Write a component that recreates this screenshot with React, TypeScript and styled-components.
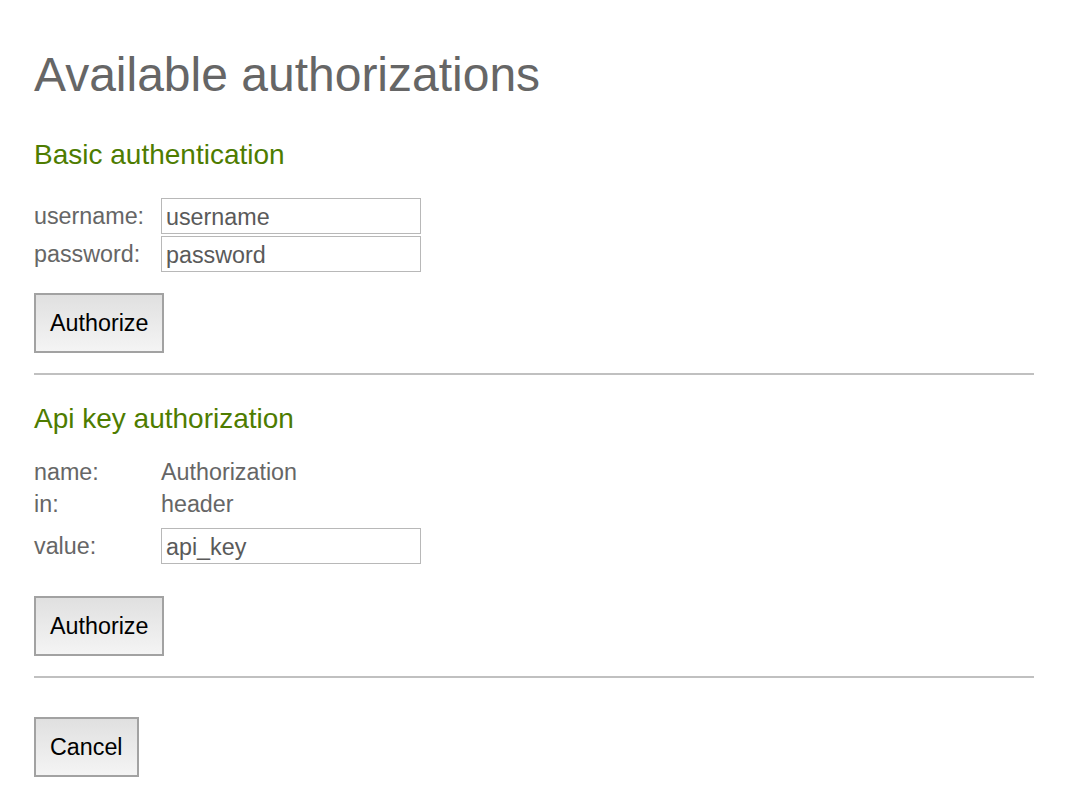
import React from "react";
import styled, { createGlobalStyle } from "styled-components";

const GlobalStyle = createGlobalStyle`
  html, body {
    margin: 0;
    padding: 0;
    background: #ffffff;
  }
  body {
    font-family: "Liberation Sans", Arial, Helvetica, sans-serif;
  }
`;

const FONT = "23.3px";

const Page = styled.div`
  padding: 47px 36px 0 34px;
  display: flex;
  flex-direction: column;
  align-items: flex-start;
`;

const Title = styled.h1`
  margin: 0;
  font-size: 48px;
  line-height: 56px;
  font-weight: normal;
  color: #666666;
`;

const SectionTitle = styled.h3<{ $mt: number }>`
  margin: ${(p) => p.$mt}px 0 0;
  font-size: 28px;
  line-height: 32px;
  font-weight: normal;
  color: #4e7c00;
`;

const FieldGrid = styled.div<{ $mt: number; $rows: string; $gap: number }>`
  margin-top: ${(p) => p.$mt}px;
  display: grid;
  grid-template-columns: 127px 260px;
  grid-template-rows: ${(p) => p.$rows};
  row-gap: ${(p) => p.$gap}px;
  align-items: end;
`;

const Label = styled.span<{ $lh: number }>`
  font-size: ${FONT};
  line-height: ${(p) => p.$lh}px;
  color: #666666;
  padding-top: 1px;
`;

const Value = styled.span`
  font-size: ${FONT};
  line-height: 32px;
  color: #666666;
`;

const TextInput = styled.input`
  box-sizing: border-box;
  width: 260px;
  height: 36px;
  margin: 0;
  padding: 2px 4px 0;
  border: 1px solid #b8b8b8;
  border-radius: 0;
  font-family: "Liberation Sans", Arial, Helvetica, sans-serif;
  font-size: ${FONT};
  color: #5a5a5a;
  background: #ffffff;
  outline: none;

  &::placeholder {
    color: #5a5a5a;
    opacity: 1;
  }
`;

const Button = styled.button<{ $mt: number }>`
  margin-top: ${(p) => p.$mt}px;
  box-sizing: border-box;
  height: 60px;
  padding: 0 14px;
  border: 2px solid #a2a2a2;
  border-radius: 0;
  background: linear-gradient(to bottom, #e0e0e0, #f4f4f4);
  font-family: "Liberation Sans", Arial, Helvetica, sans-serif;
  font-size: ${FONT};
  color: #000000;
  cursor: pointer;
`;

const Divider = styled.hr<{ $mt: number }>`
  align-self: stretch;
  margin: ${(p) => p.$mt}px 0 0;
  height: 2px;
  border: none;
  background: #c0c0c0;
`;

export default function App() {
  return (
    <>
      <GlobalStyle />
      <Page>
        <Title>Available authorizations</Title>

        <SectionTitle $mt={36}>Basic authentication</SectionTitle>
        <FieldGrid $mt={27} $rows="36px 36px" $gap={2}>
          <Label $lh={36}>username:</Label>
          <TextInput placeholder="username" />
          <Label $lh={36}>password:</Label>
          <TextInput placeholder="password" />
        </FieldGrid>
        <Button $mt={21}>Authorize</Button>

        <Divider $mt={20} />

        <SectionTitle $mt={28}>Api key authorization</SectionTitle>
        <FieldGrid $mt={21} $rows="32px 32px 44px" $gap={0}>
          <Label $lh={32}>name:</Label>
          <Value>Authorization</Value>
          <Label $lh={32}>in:</Label>
          <Value>header</Value>
          <Label $lh={36}>value:</Label>
          <TextInput placeholder="api_key" />
        </FieldGrid>
        <Button $mt={32}>Authorize</Button>

        <Divider $mt={20} />

        <Button $mt={39}>Cancel</Button>
      </Page>
    </>
  );
}
